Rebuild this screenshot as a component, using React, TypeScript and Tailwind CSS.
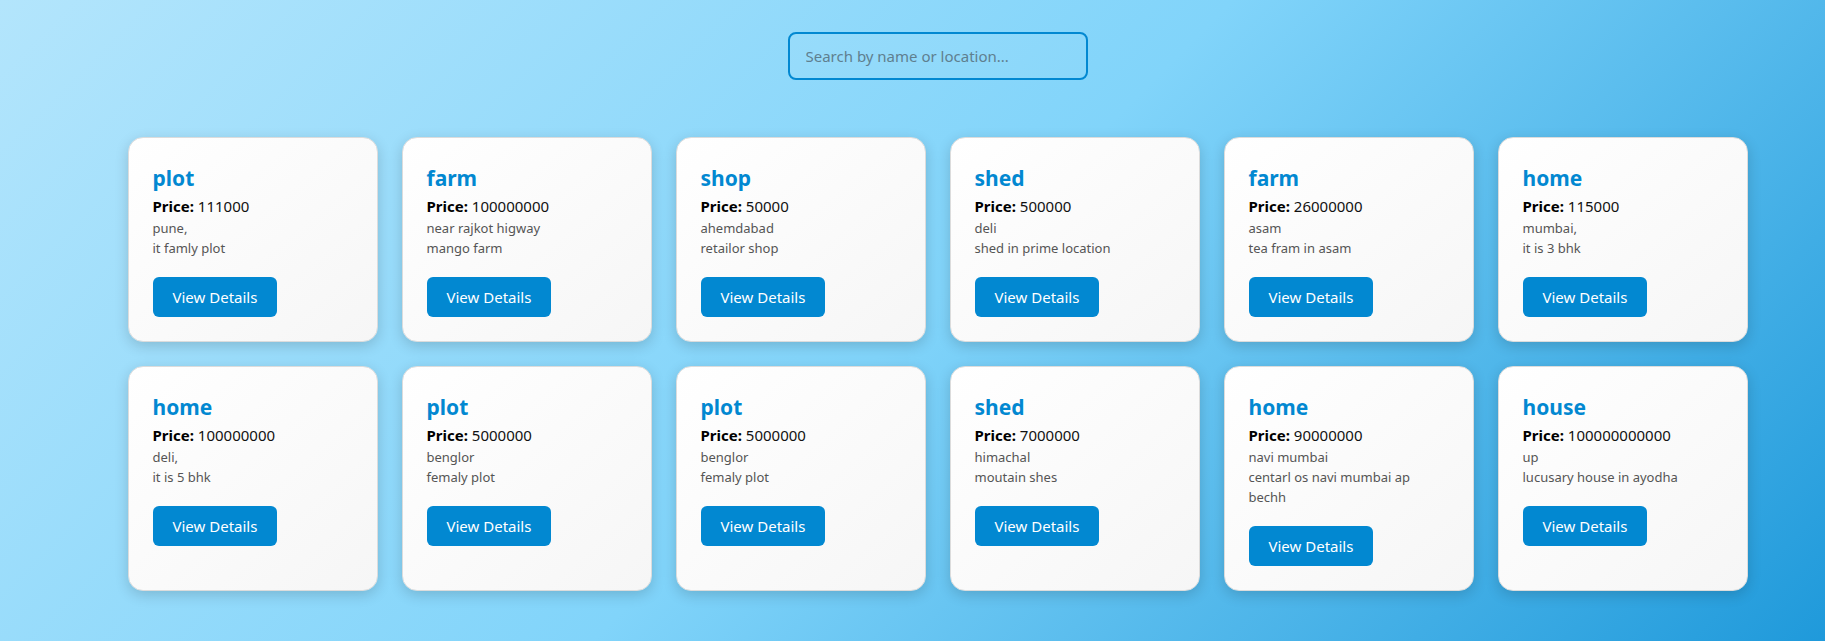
import React, { useState } from 'react';

interface Property {
  id: number;
  title: string;
  price: string;
  location: string;
  description: string;
}

const properties: Property[] = [
  { id: 1, title: 'plot', price: '111000', location: 'pune,', description: 'it famly plot' },
  { id: 2, title: 'farm', price: '100000000', location: 'near rajkot higway', description: 'mango farm' },
  { id: 3, title: 'shop', price: '50000', location: 'ahemdabad', description: 'retailor shop' },
  { id: 4, title: 'shed', price: '500000', location: 'deli', description: 'shed in prime location' },
  { id: 5, title: 'farm', price: '26000000', location: 'asam', description: 'tea fram in asam' },
  { id: 6, title: 'home', price: '115000', location: 'mumbai,', description: 'it is 3 bhk' },
  { id: 7, title: 'home', price: '100000000', location: 'deli,', description: 'it is 5 bhk' },
  { id: 8, title: 'plot', price: '5000000', location: 'benglor', description: 'femaly plot' },
  { id: 9, title: 'plot', price: '5000000', location: 'benglor', description: 'femaly plot' },
  { id: 10, title: 'shed', price: '7000000', location: 'himachal', description: 'moutain shes' },
  { id: 11, title: 'home', price: '90000000', location: 'navi mumbai', description: 'centarl os navi mumbai ap bechh' },
  { id: 12, title: 'house', price: '100000000000', location: 'up', description: 'lucusary house in ayodha' },
];

const PropertyCard: React.FC<{ item: Property }> = ({ item }) => (
  <div className="rounded-[15px] border border-[#dcdcdc] bg-gradient-to-br from-white to-[#f6f6f6] p-6 shadow-[0_4px_14px_rgba(0,0,0,0.16)]">
    <h3 className="text-[21px] leading-[30px] font-bold text-[#0288d1] translate-y-[1px]">{item.title}</h3>
    <p className="mt-0.5 text-[15px] leading-[24px] text-[#111]">
      <span className="font-bold text-black">Price:</span> {item.price}
    </p>
    <p className="text-[13px] leading-[20px] text-[#555]">{item.location}</p>
    <p className="text-[13px] leading-[20px] text-[#555]">{item.description}</p>
    <button
      type="button"
      className="mt-[19px] h-10 rounded-md bg-[#0288d1] px-5 text-[15px] text-white hover:bg-[#0277bd]"
    >
      View Details
    </button>
  </div>
);

export default function App() {
  const [query, setQuery] = useState('');

  const filtered = properties.filter(
    (p) =>
      p.title.toLowerCase().includes(query.toLowerCase()) ||
      p.location.toLowerCase().includes(query.toLowerCase())
  );

  return (
    <div
      className="min-h-screen bg-[linear-gradient(135deg,#b3e5fc_0%,#81d4fa_50%,#0288d1_115%)] pl-[50px] pt-8 pb-12"
      style={{ fontFamily: '"Segoe UI", "Noto Sans", sans-serif' }}
    >
      <div className="flex justify-center">
        <input
          type="text"
          value={query}
          onChange={(e) => setQuery(e.target.value)}
          placeholder="Search by name or location..."
          className="h-12 w-[300px] rounded-lg border-2 border-[#0288d1] bg-white/5 px-4 text-[15px] text-[#222] placeholder:text-[#5f7f8f] focus:outline-none"
        />
      </div>

      <div className="mx-auto mt-[57px] grid w-[1620px] grid-cols-6 gap-6">
        {filtered.map((item) => (
          <PropertyCard key={item.id} item={item} />
        ))}
      </div>
    </div>
  );
}
